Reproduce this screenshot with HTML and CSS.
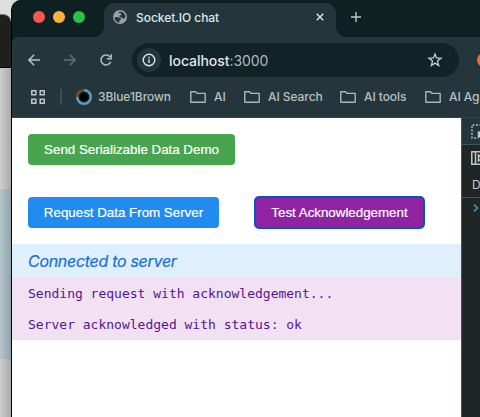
FILE: index.html
```html
<!DOCTYPE html>
<html lang="en">
<head>
<meta charset="utf-8">
<title>Socket.IO chat</title>
<link rel="stylesheet" href="styles.css">
</head>
<body>
<div class="desktop">
  <div class="behind"><div class="behind-title"></div><div class="behind-body"></div><div class="behind-selection"></div><div class="behind-body"></div></div>
  <div class="window">
    <header class="tabs">
      <div class="lights"><i class="red"></i><i class="yellow"></i><i class="green"></i></div>
      <div class="tab">
        <svg class="globe" width="14" height="14" viewBox="0 0 14 14"><circle cx="7" cy="7" r="7" fill="#9aa0a6"/><path d="M1.6 7.2h3.5c1.5 0 1.8 1 2.8 1.3v1.6H6.5v2.2C3.6 12.4 1.4 10 1.6 7.2zM5 3.2c.4-1.1 1.4-1.6 2.9-1.6 2.8.4 4.6 2.9 4.5 5.6-.3.9-.9 1.2-1.9 1.2-1.7 0-1.6-1.3-3.9-1.4V5.6c.8 0 1.7-.2 1.8-1.5-.8-.1-1.3-.9-.5-1.5z" fill="#24363b"/></svg>
        <span class="tab-title">Socket.IO chat</span>
        <svg class="close" width="8" height="8" viewBox="0 0 8 8"><path d="M.7.7l6.6 6.6M7.3.7L.7 7.3" stroke="#dce4e5" stroke-width="1.4"/></svg>
      </div>
      <svg class="plus" width="10" height="10" viewBox="0 0 10 10"><path d="M5 0v10M0 5h10" stroke="#b4cccf" stroke-width="1.4"/></svg>
    </header>
    <nav class="toolbar">
      <svg class="back" width="12" height="12" viewBox="0 0 12 12"><path d="M12 6H1M6.2.7L.9 6l5.3 5.3" stroke="#a9c7cc" stroke-width="1.5" fill="none"/></svg>
      <svg class="forward" width="12" height="12" viewBox="0 0 12 12"><path d="M0 6h11M5.8.7L11.1 6l-5.3 5.3" stroke="#617276" stroke-width="1.5" fill="none"/></svg>
      <svg class="reload" width="12" height="12" viewBox="0 0 12 12"><path d="M10.7 7.7A5 5 0 1 1 10.1 3M11.2.3v4.5H6.9" stroke="#a9c7cc" stroke-width="1.5" fill="none"/></svg>
      <div class="address">
        <div class="info"><svg width="14" height="14" viewBox="0 0 14 14"><circle cx="7" cy="7" r="5.8" stroke="#dce5e6" stroke-width="1.4" fill="none"/><path d="M7 6.3V10M7 3.8v1.4" stroke="#dce5e6" stroke-width="1.4"/></svg></div>
        <span class="url">localhost<span>:3000</span></span>
        <svg class="star" width="16" height="16" viewBox="0 0 16 16"><path d="M8 2l1.5 4 4.5.3-3.5 2.8 1.2 4.4L8 11.1l-3.7 2.4 1.2-4.4L2 6.3 6.5 6z" fill="none" stroke="#c0cfd1" stroke-width="1.3"/></svg>
      </div>
      <div class="extension"></div>
    </nav>
    <nav class="bookmarks">
      <svg class="apps" width="14" height="14" viewBox="0 0 14 14"><path d="M.8.8h4v4h-4zM9.2.8h4v4h-4zM.8 9.2h4v4h-4zM9.2 9.2h4v4h-4z" fill="none" stroke="#c0c7c7" stroke-width="1.5"/></svg>
      <i class="divider"></i>
      <i class="eye"></i>
      <span class="bm brown">3Blue1Brown</span>
      <svg class="folder" width="16" height="12" viewBox="0 0 16 12"><path d="M.8.8h4.7l1.6 1.6h8.1v8.8H.8z"/></svg><span class="bm ai">AI</span>
      <svg class="folder" width="16" height="12" viewBox="0 0 16 12"><path d="M.8.8h4.7l1.6 1.6h8.1v8.8H.8z"/></svg><span class="bm search">AI Search</span>
      <svg class="folder" width="16" height="12" viewBox="0 0 16 12"><path d="M.8.8h4.7l1.6 1.6h8.1v8.8H.8z"/></svg><span class="bm tools">AI tools</span>
      <svg class="folder" width="16" height="12" viewBox="0 0 16 12"><path d="M.8.8h4.7l1.6 1.6h8.1v8.8H.8z"/></svg><span class="bm">AI Agents</span>
    </nav>
    <div class="content">
      <main class="page">
        <div class="row"><button class="send">Send Serializable Data Demo</button></div>
        <div class="row second"><button class="request">Request Data From Server</button><button class="ack">Test Acknowledgement</button></div>
        <div class="status"><span>Connected to server</span></div>
        <div class="messages"><p>Sending request with acknowledgement...</p><p>Server acknowledged with status: ok</p></div>
      </main>
      <aside class="devtools">
        <div class="inspect"><svg width="20" height="16" viewBox="0 0 20 16"><path d="M14 1H1v13h5" fill="none" stroke="#b0b9ba" stroke-width="1.5" stroke-dasharray="2 1.5"/><path d="M6.8 7v8l2.4-2.4L12 15l1-1-2.7-2.6L13 9z" fill="#c5cccc"/></svg></div>
        <div class="console">
          <svg width="20" height="14" viewBox="0 0 20 14"><path d="M.8.8h15v12.4H.8zM4.5 1v12M7.5 4v6l4-3z" fill="none" stroke="#c3c9c9" stroke-width="1.5"/></svg>
          <span>D</span>
        </div>
        <svg class="prompt" width="6" height="8" viewBox="0 0 6 8"><path d="M1 .6L4.5 4 1 7.4" fill="none" stroke="#3f9cad" stroke-width="1.5"/></svg>
      </aside>
    </div>
  </div>
</div>
</body>
</html>
```

FILE: styles.css
```css
* { box-sizing: border-box; }
body { margin: 0; font-family: Inter, sans-serif; }
svg { flex: none; display: block; }
.desktop { display: flex; width: 480px; height: 417px; overflow: hidden; background: linear-gradient(#d9d9d9 14px, #000 14px); }
.behind { width: 11px; flex: none; display: flex; flex-direction: column; padding-top: 14px; background: #dedede; }
.behind-title { height: 54px; flex: none; background: #211f1d; border-top: 1px solid #77736f; border-bottom: 1px solid #000; border-top-right-radius: 8px; }
.behind-body { height: 121px; flex: none; background: linear-gradient(90deg, #cecece, #aaa); }
.behind-selection { height: 170px; flex: none; background: linear-gradient(90deg, #b5c5cc, #92a3ab); }
.window { width: 469px; flex: none; border-left: 1px solid #000; border-top-left-radius: 10px; background: #0e2022; overflow: hidden; }
.tabs { display: flex; height: 37px; background: #0e2022; }
.lights { display: flex; gap: 8px; padding: 11px 0 0 21px; width: 92px; }
.lights i { width: 12px; height: 12px; border-radius: 50%; }
.red { background: #ff5550; }
.yellow { background: #ffb238; }
.green { background: #2bc147; }
.tab { position: relative; display: flex; align-items: center; width: 232px; height: 34px; margin-top: 3px; padding: 0 0 6px 9px; border-radius: 10px 10px 0 0; background: #24363b; }
.tab::before, .tab::after { content: ""; position: absolute; bottom: 0; width: 10px; height: 10px; }
.tab::before { left: -10px; background: radial-gradient(circle at 0 0, transparent 9.5px, #24363b 10px); }
.tab::after { right: -10px; background: radial-gradient(circle at 100% 0, transparent 9.5px, #24363b 10px); }
.tab-title { margin-left: 9px; width: 180px; font-size: 12px; letter-spacing: -.05px; font-weight: 500; color: #dfe7e8; white-space: nowrap; }
.plus { margin: 12px 0 0 15px; }
.toolbar { display: flex; align-items: center; height: 46px; background: #24363b; border-top-left-radius: 6px; }
.back { margin-left: 16px; }
.forward { margin-left: 24px; }
.reload { margin-left: 24px; }
.address { display: flex; align-items: center; width: 327px; height: 34px; margin-left: 20px; padding: 0 16px 0 5px; flex: none; border-radius: 17px; background: #122327; }
.info { display: grid; place-items: center; width: 24px; height: 24px; flex: none; border-radius: 50%; background: #24363b; }
.url { flex: 1; margin-left: 8px; font-size: 14px; letter-spacing: -.05px; color: #e0e7e8; font-weight: 500; white-space: nowrap; }
.url span { color: #afbbbd; font-weight: 400; }
.extension { width: 14px; height: 14px; margin-left: 18px; flex: none; border-radius: 50%; background: #ff681f; }
.bookmarks { display: flex; align-items: center; height: 35px; padding: 0 0 7px 19px; background: #24363b; border-bottom: 1px solid #423e40; }
.divider { width: 2px; height: 16px; margin: 0 14px 0 15px; flex: none; background: #3c4e52; }
.eye { width: 16px; height: 16px; flex: none; border-radius: 50%; background: radial-gradient(circle, #000 3.5px, #102a35 5px, transparent 6px), conic-gradient(#5b9dbb 0deg, #5ba2c5 270deg, #81512f 270deg, #6c432b 360deg); }
.bm { flex: none; font-size: 12px; font-weight: 500; letter-spacing: -.07px; color: #b8c0c1; white-space: nowrap; }
.brown { width: 98px; padding-left: 6px; }
.folder path { fill: none; stroke: #aeb6b6; stroke-width: 1.4; stroke-linejoin: round; }
.folder + .bm { padding-left: 8px; }
.ai { width: 38px; }
.search { width: 80px; }
.tools { width: 69px; }
.content { display: flex; height: 299px; }
.page { width: 449px; flex: none; padding-top: 16px; background: #fff; }
.row { display: flex; padding-left: 16px; }
.second { margin-top: 31px; gap: 35px; align-items: center; height: 33px; }
button { height: 31px; padding: 0; border: 0; border-radius: 4px; color: #fff; font: 13.333px "Liberation Sans", sans-serif; white-space: nowrap; -webkit-text-stroke: .2px #fff; }
.send { width: 207px; background: #48a44f; }
.request { width: 191px; background: #218bef; }
.ack { width: 171px; height: 33px; background: #8f23a1; border: 2px solid #0754be; border-radius: 5px; }
.status { display: flex; align-items: center; height: 34px; margin-top: 15px; padding-left: 16px; background: #dfeffc; color: #1b70cf; font-size: 16px; font-style: italic; letter-spacing: -.3px; -webkit-text-stroke: .2px #1b70cf; }
.messages { padding-left: 16px; background: #f2e1f2; color: #551594; font: 13px/31px "DejaVu Sans Mono", monospace; }
.messages p { height: 31px; margin: 0; }
.devtools { width: 19px; overflow: hidden; background: #202526; border-left: 1px solid #40585b; }
.inspect { height: 27px; padding: 6px 0 0 9px; background: #24363b; border-bottom: 1px solid #40585b; }
.console { height: 53px; padding: 6px 0 0 9px; border-bottom: 1px solid #40585b; color: #c3c9c9; font-size: 12px; }
.console span { display: block; padding: 12px 0 0 1px; }
.prompt { margin: 6px 0 0 11px; }
```
